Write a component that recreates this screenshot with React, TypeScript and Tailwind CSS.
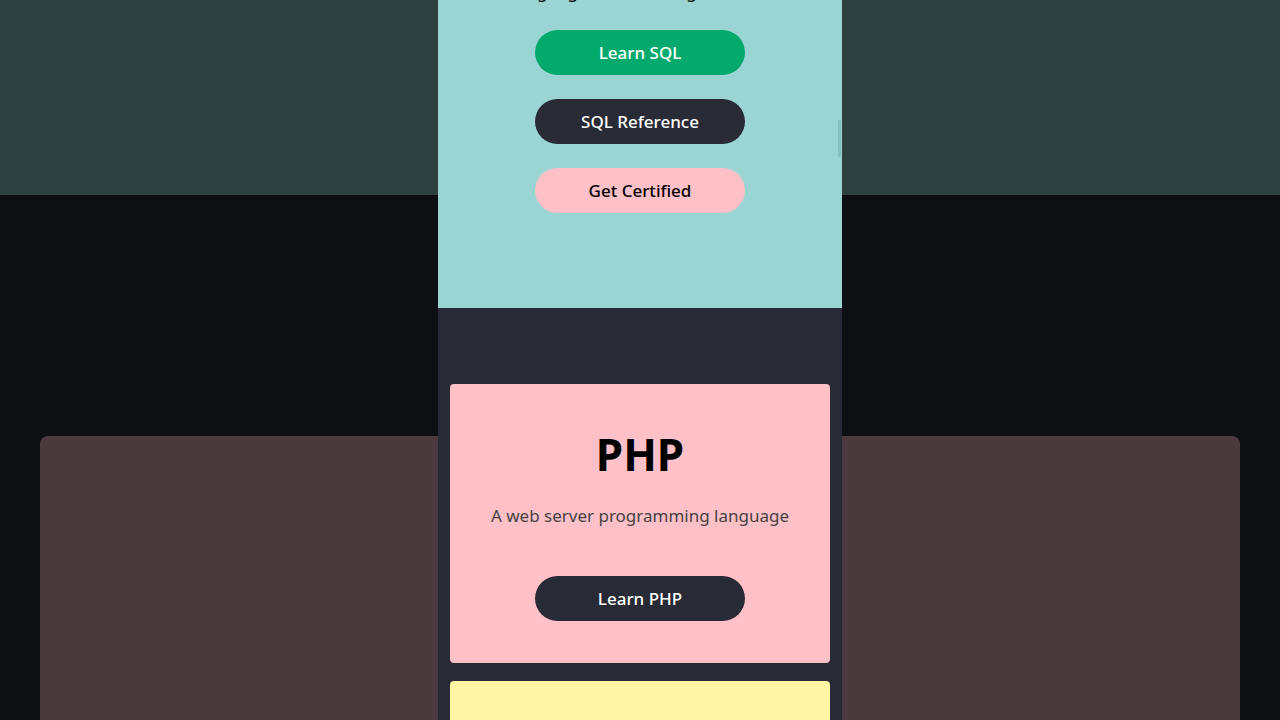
const font = { fontFamily: '"Noto Sans", "Open Sans", sans-serif' };

function SideColumn({ side }: { side: "left" | "right" }) {
  return (
    <div className="flex w-[438px] shrink-0 flex-col">
      <div className="h-[195px] bg-[#2f4040] shadow-[0_1px_2px_rgba(0,0,0,0.6)]" />
      <div className="h-[241px] bg-[#0e0f12]" />
      <div className={side === "left" ? "flex-1 bg-[#0e0f12] pl-10" : "flex-1 bg-[#0e0f12] pr-10"}>
        <div
          className={
            side === "left"
              ? "h-full rounded-tl-lg bg-[#4b3a3d]"
              : "h-full rounded-tr-lg bg-[#4b3a3d]"
          }
        />
      </div>
    </div>
  );
}

function PillButton({ label, tone }: { label: string; tone: "green" | "dark" | "pink" }) {
  const tones = {
    green: "bg-[#04aa6d] text-white",
    dark: "bg-[#282a35] text-white",
    pink: "bg-[#ffc0c7] text-black",
  };
  return (
    <button
      className={`flex h-[45px] w-[210px] items-center justify-center rounded-full text-[17px] font-medium ${tones[tone]}`}
    >
      {label}
    </button>
  );
}

export default function App() {
  return (
    <div className="flex h-[720px] w-[1280px] overflow-hidden bg-[#0e0f12]" style={font}>
      <SideColumn side="left" />

      <main className="relative flex w-[404px] shrink-0 flex-col bg-[#282a35]">
        {/* SQL section, scrolled so only the bottom is in view */}
        <section className="flex h-[308px] shrink-0 flex-col items-center bg-[#9bd5d3]">
          <p className="-mt-[20px] h-6 text-[17px] leading-6 text-black">
            A language for accessing databases
          </p>
          <div className="mt-[26px] flex flex-col items-center gap-6">
            <PillButton label="Learn SQL" tone="green" />
            <PillButton label="SQL Reference" tone="dark" />
            <PillButton label="Get Certified" tone="pink" />
          </div>
        </section>

        <div className="flex flex-col gap-[18px] px-3 pt-[76px]">
          <div className="flex flex-col items-center rounded bg-[#ffc0c7] pb-[42px] pt-[44px]">
            <h2 className="text-[44px] font-bold leading-[1.2] text-black">PHP</h2>
            <p className="mt-[22px] text-[17px] text-[#444]">A web server programming language</p>
            <div className="mt-[48px]">
              <PillButton label="Learn PHP" tone="dark" />
            </div>
          </div>
          <div className="h-[120px] rounded bg-[#fff4a3]" />
        </div>

        {/* scrollbar thumb */}
        <div className="absolute right-[1px] top-[120px] h-[37px] w-[3px] rounded-sm bg-[#86bfbd]" />
      </main>

      <SideColumn side="right" />
    </div>
  );
}
